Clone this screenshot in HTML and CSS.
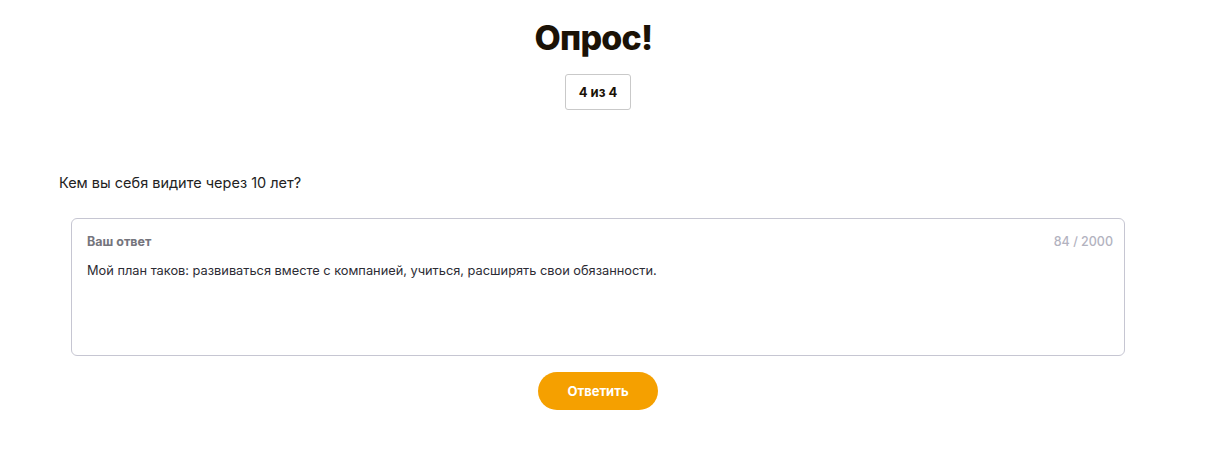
FILE: index.html
```html
<!DOCTYPE html>
<html lang="ru">
<head>
<meta charset="utf-8">
<link rel="stylesheet" href="styles.css">
</head>
<body>
<main class="page">
  <h1 class="title">Опрос!</h1>
  <div class="step">4 из 4</div>
  <p class="question">Кем вы себя видите через 10 лет?</p>
  <div class="answer">
    <div class="answer-head">
      <span class="answer-label">Ваш ответ</span>
      <span class="answer-count">84 / 2000</span>
    </div>
    <div class="answer-text">Мой план таков: развиваться вместе с компанией, учиться, расширять свои обязанности.</div>
  </div>
  <div class="actions">
    <button class="submit">Ответить</button>
  </div>
</main>
</body>
</html>
```
FILE: styles.css
```css
html, body {
  margin: 0;
  padding: 0;
  background: #fff;
}
body {
  font-family: Inter, "Noto Sans", sans-serif;
  color: #1d1d1f;
}
.page {
  width: 1196px;
  display: flex;
  flex-direction: column;
  align-items: center;
  padding-top: 16px;
}
.title {
  margin: 0;
  padding-right: 9px;
  font-size: 34px;
  line-height: 44px;
  font-weight: 800;
  color: #1b1206;
  letter-spacing: -0.8px;
}
.step {
  margin-top: 14px;
  width: 66px;
  height: 36px;
  box-sizing: border-box;
  border: 1px solid #c9c9c9;
  border-radius: 3px;
  display: flex;
  align-items: center;
  justify-content: center;
  font-size: 13px;
  font-weight: 700;
  color: #1b1206;
}
.question {
  align-self: stretch;
  margin: 63px 0 0 59px;
  font-size: 14.5px;
  line-height: 20px;
  color: #222;
}
.answer {
  align-self: stretch;
  margin: 25px 71px 0 71px;
  height: 138px;
  box-sizing: border-box;
  border: 1px solid #c6c6d2;
  border-radius: 6px;
  padding: 15px 11px 0 15px;
}
.answer-head {
  display: flex;
  justify-content: space-between;
  font-size: 12.5px;
  line-height: 16px;
}
.answer-label {
  font-weight: 700;
  color: #75757d;
}
.answer-count {
  color: #b3b3bf;
  font-weight: 500;
}
.answer-text {
  margin-top: 13px;
  font-size: 12.8px;
  line-height: 16px;
  color: #2c2c34;
}
.actions {
  margin-top: 16px;
}
.submit {
  width: 120px;
  height: 38px;
  border: none;
  border-radius: 19px;
  background: #f5a000;
  color: #fff;
  font-family: inherit;
  font-size: 13px;
  font-weight: 700;
  cursor: pointer;
}
```
